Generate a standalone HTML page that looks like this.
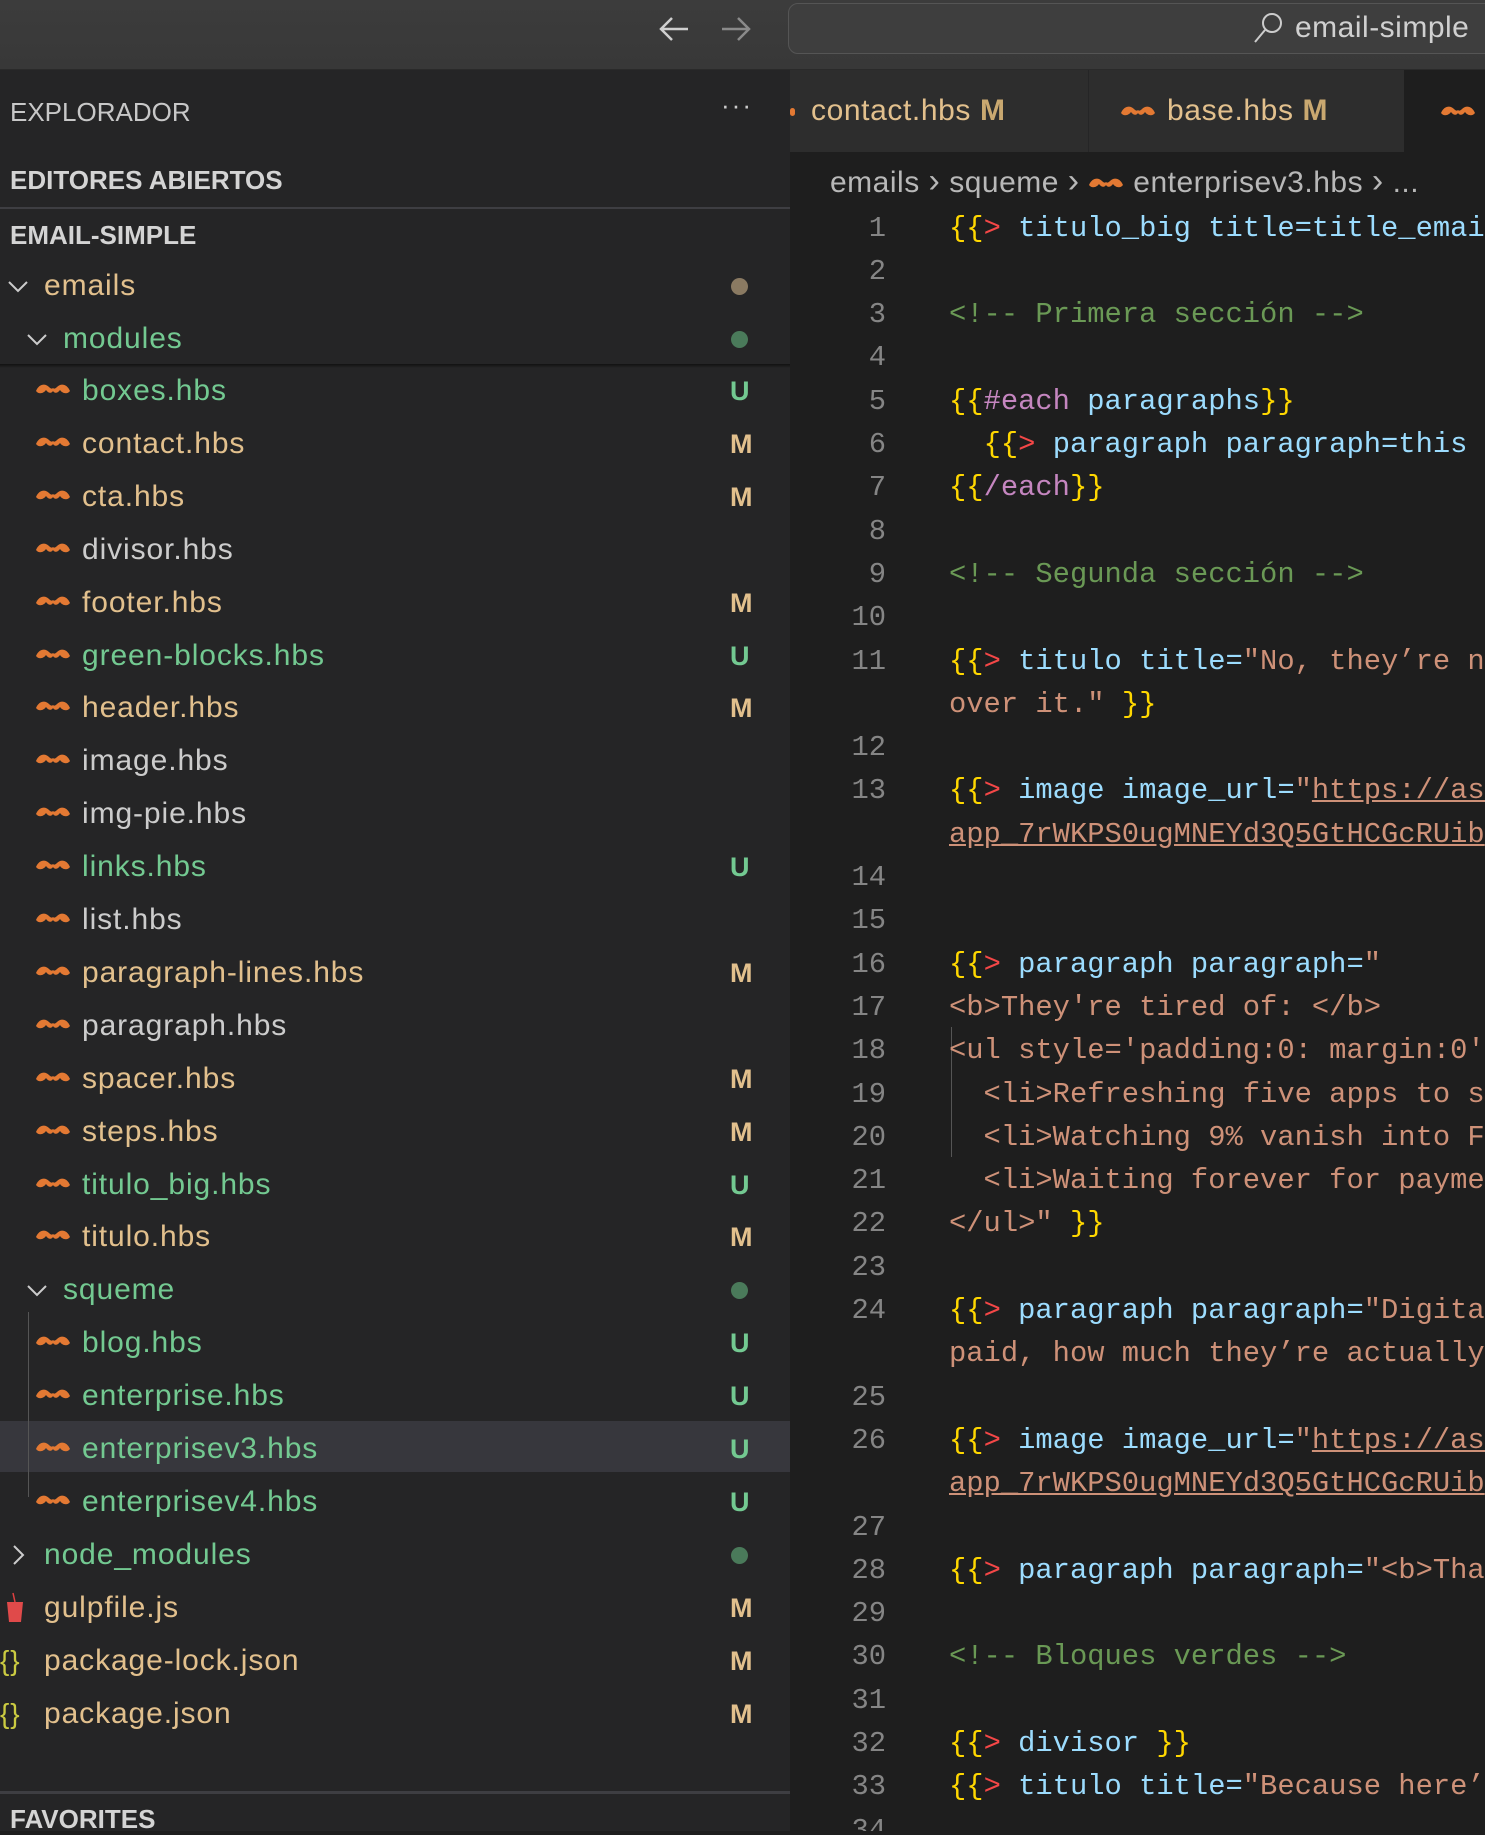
<!DOCTYPE html>
<html><head><meta charset="utf-8"><style>
*{margin:0;padding:0;box-sizing:border-box}
body{width:1485px;height:1831px;overflow:hidden;background:#1e1e1e;position:relative;font-family:"Liberation Sans",sans-serif}
.title{position:absolute;left:0;top:0;width:1485px;height:70px;background:linear-gradient(#3c3c3c,#383838);border-bottom:1px solid #2a2a2a}
.search{position:absolute;left:788px;top:3px;width:710px;height:51px;border:1.5px solid #555;border-radius:10px;background:#3e3e3e}
.side{position:absolute;left:0;top:70px;width:790px;height:1761px;background:#252526}
.r{position:absolute;left:0;width:790px;height:52px;line-height:52px;font-size:30px;letter-spacing:0.9px;white-space:nowrap}
.r .t{position:absolute}
.b{position:absolute;left:730px;font-size:27px;font-weight:bold;letter-spacing:0}
.dot{position:absolute;left:731px;width:17px;height:17px;border-radius:50%;top:18px}
.g{color:#73c991}.m{color:#e2c08d}.w{color:#cccccc}
.ic{position:absolute;left:35px;top:15px}
.tabs{position:absolute;left:790px;top:70px;width:695px;height:82px;background:#252526}
.code{position:absolute;left:790px;top:152px;width:695px;height:1679px;background:#1e1e1e;overflow:hidden}
.l{position:absolute;left:0;height:43px;line-height:43px;font-family:"Liberation Mono",monospace;font-size:28.8px;white-space:pre}
.n{position:absolute;width:96px;text-align:right;color:#858585}
.c{position:absolute;left:159px}
.y{color:#ffd700}.rd{color:#f44747}.bl{color:#9cdcfe}.s{color:#ce9178}.cm{color:#6a9955}.p{color:#c586c0}.u{text-decoration:underline}
</style></head><body>
<svg width="0" height="0" style="position:absolute"><defs><symbol id="mu" viewBox="0 0 36 20"><path d="M1 11c3-7 9-8 13-4 2 2 3 2 4 1 1 1 2 1 4-1 4-4 10-3 13 4-3 4-8 2-10-1-2 3-5 4-7 1-2 3-5 2-7-1-2 3-7 5-10 1z" fill="#e37933"/></symbol></defs></svg>
<div class="title">
<svg style="position:absolute;left:656px;top:12px" width="40" height="34" viewBox="0 0 40 34"><path d="M32 17H6M16 6L5 17l11 11" stroke="#cfcfcf" stroke-width="2.5" fill="none"/></svg>
<svg style="position:absolute;left:716px;top:12px" width="40" height="34" viewBox="0 0 40 34"><path d="M6 17h26M22 6l11 11-11 11" stroke="#8a8a8a" stroke-width="2.5" fill="none"/></svg>
<div class="search"></div>
<svg style="position:absolute;left:1250px;top:10px" width="36" height="36" viewBox="0 0 36 36"><circle cx="22" cy="13" r="9" stroke="#ccc" stroke-width="2" fill="none"/><path d="M15 20L5 32" stroke="#ccc" stroke-width="2"/></svg>
<div style="position:absolute;left:1295px;top:11px;font-size:30px;letter-spacing:0.5px;color:#d0d0d0">email-simple</div>
</div>
<div class="side">
<div style="position:absolute;left:10px;top:27px;font-size:26px;color:#c8c8c8">EXPLORADOR</div>
<div style="position:absolute;left:721px;top:20px;font-size:26px;color:#ccc;letter-spacing:2px">···</div>
<div style="position:absolute;left:10px;top:95px;font-size:26px;color:#d4d4d4;font-weight:bold">EDITORES ABIERTOS</div>
<div style="position:absolute;left:0;top:137px;width:790px;height:2px;background:#3e3e42"></div>
<div style="position:absolute;left:10px;top:150px;font-size:26px;color:#d4d4d4;font-weight:bold">EMAIL-SIMPLE</div>
<div style="position:absolute;left:0;top:1721px;width:790px;height:3px;background:#3e3e42"></div>
<div style="position:absolute;left:10px;top:1734px;font-size:26px;color:#d4d4d4;font-weight:bold">FAVORITES</div>
</div>
<div style="position:absolute;left:0;top:1421px;width:790px;height:51px;background:#37373d"></div>
<div style="position:absolute;left:28px;top:1312px;width:1px;height:185px;background:#555"></div>
<div style="position:absolute;left:0;top:364px;width:790px;height:4px;background:linear-gradient(#111,#252526)"></div>
<div class="r" style="top:260px"><svg style="position:absolute;left:6px;top:16px" width="24" height="20"><path d="M3 6l9 9 9-9" stroke="#ccc" stroke-width="2" fill="none"/></svg><span class="t m" style="left:44px">emails</span><span class="dot" style="background:#8a7a62"></span></div>
<div class="r" style="top:313px"><svg style="position:absolute;left:25px;top:16px" width="24" height="20"><path d="M3 6l9 9 9-9" stroke="#ccc" stroke-width="2" fill="none"/></svg><span class="t g" style="left:63px">modules</span><span class="dot" style="background:#4a7a5a"></span></div>
<div id="files"></div>
<script>
var F=[["boxes.hbs","g","U"],["contact.hbs","m","M"],["cta.hbs","m","M"],["divisor.hbs","w",""],["footer.hbs","m","M"],["green-blocks.hbs","g","U"],["header.hbs","m","M"],["image.hbs","w",""],["img-pie.hbs","w",""],["links.hbs","g","U"],["list.hbs","w",""],["paragraph-lines.hbs","m","M"],["paragraph.hbs","w",""],["spacer.hbs","m","M"],["steps.hbs","m","M"],["titulo_big.hbs","g","U"],["titulo.hbs","m","M"],["#squeme","g","dot"],["blog.hbs","g","U"],["enterprise.hbs","g","U"],["enterprisev3.hbs","g","U"],["enterprisev4.hbs","g","U"],["!node_modules","g","dot"],["*gulpfile.js","m","M"],["{package-lock.json","m","M"],["{package.json","m","M"]];
var h="";
F.forEach(function(f,i){var top=391+52.9*i-26,n=f[0],c=f[1],b=f[2],inner="";
if(n[0]=="#"){inner='<svg style="position:absolute;left:25px;top:16px" width="24" height="20"><path d="M3 6l9 9 9-9" stroke="#ccc" stroke-width="2" fill="none"/></svg><span class="t '+c+'" style="left:63px">'+n.slice(1)+'</span>';}
else if(n[0]=="!"){inner='<svg style="position:absolute;left:8px;top:14px" width="20" height="24"><path d="M6 3l9 9-9 9" stroke="#ccc" stroke-width="2" fill="none"/></svg><span class="t '+c+'" style="left:44px">'+n.slice(1)+'</span>';}
else if(n[0]=="*"){inner='<svg style="position:absolute;left:4px;top:10px" width="22" height="34"><path d="M9 1l2 9" stroke="#e04040" stroke-width="1.5"/><path d="M3 10h16l-2 20h-12z" fill="#e04a4a"/></svg><span class="t '+c+'" style="left:44px">'+n.slice(1)+'</span>';}
else if(n[0]=="{"){inner='<span class="t" style="left:0;color:#cbcb41;font-size:28px">{}</span><span class="t '+c+'" style="left:44px">'+n.slice(1)+'</span>';}
else{inner='<svg class="ic" width="36" height="20"><use href="#mu"/></svg><span class="t '+c+'" style="left:82px">'+n+'</span>';}
if(b=="dot")inner+='<span class="dot" style="background:#4a7a5a"></span>';else if(b)inner+='<span class="b '+(b=="U"?"g":"m")+'">'+b+'</span>';
h+='<div class="r" style="top:'+top+'px">'+inner+'</div>';});
document.getElementById("files").innerHTML=h;
</script>
<div class="tabs">
<div style="position:absolute;left:0;top:0;width:298px;height:82px;background:#2d2d2d"></div>
<div style="position:absolute;left:299px;top:0;width:315px;height:82px;background:#2d2d2d"></div>
<div style="position:absolute;left:614px;top:0;width:81px;height:82px;background:#1e1e1e"></div>
<div style="position:absolute;left:0;top:38px;width:5px;height:8px;background:#e37933;border-radius:3px"></div>
<div style="position:absolute;left:21px;top:24px;font-size:30px;letter-spacing:0.6px;color:#e2c08d">contact.hbs <b style="color:#c9a870">M</b></div>
<svg style="position:absolute;left:330px;top:32px" width="36" height="20"><use href="#mu"/></svg>
<div style="position:absolute;left:377px;top:24px;font-size:30px;letter-spacing:0.6px;color:#e2c08d">base.hbs <b style="color:#c9a870">M</b></div>
<svg style="position:absolute;left:650px;top:32px" width="36" height="20"><use href="#mu"/></svg>
</div>
<div class="code">
<div style="position:absolute;left:40px;top:10px;font-size:30px;letter-spacing:0.5px;color:#b8b8b8;white-space:nowrap">emails <span style="font-size:34px">&#8250;</span> squeme <span style="font-size:34px">&#8250;</span> <svg width="36" height="20" style="vertical-align:middle"><use href="#mu"/></svg> enterprisev3.hbs <span style="font-size:34px">&#8250;</span> ...</div>
<div style="position:absolute;left:161px;top:875px;width:1px;height:130px;background:#555"></div>
<div id="cl"></div>
</div>
<script>
var Y='<span class="y">{{</span><span class="rd">&gt;</span> ',E=' <span class="y">}}</span>';
var R=[["1",Y+'<span class="bl">titulo_big title=title_email</span>'],["2",""],["3",'<span class="cm">&lt;!-- Primera sección --&gt;</span>'],["4",""],
["5",'<span class="y">{{</span><span class="p">#each</span> <span class="bl">paragraphs</span><span class="y">}}</span>'],
["6",'  <span class="y">{{</span><span class="rd">&gt;</span> <span class="bl">paragraph paragraph=this</span>'],
["7",'<span class="y">{{</span><span class="p">/each</span><span class="y">}}</span>'],["8",""],["9",'<span class="cm">&lt;!-- Segunda sección --&gt;</span>'],["10",""],
["11",Y+'<span class="bl">titulo title=</span><span class="s">"No, they’re not over</span>'],["",'<span class="s">over it."</span>'+E],["12",""],
["13",Y+'<span class="bl">image image_url=</span><span class="s">"<span class="u">https://assets</span></span>'],["",'<span class="s u">app_7rWKPS0ugMNEYd3Q5GtHCGcRUib</span>'],["14",""],["15",""],
["16",Y+'<span class="bl">paragraph paragraph=</span><span class="s">"</span>'],["17",'<span class="s">&lt;b&gt;They\'re tired of: &lt;/b&gt;</span>'],
["18",'<span class="s">&lt;ul style=\'padding:0: margin:0\'&gt;</span>'],["19",'<span class="s">  &lt;li&gt;Refreshing five apps to see</span>'],
["20",'<span class="s">  &lt;li&gt;Watching 9% vanish into Fees</span>'],["21",'<span class="s">  &lt;li&gt;Waiting forever for payments</span>'],
["22",'<span class="s">&lt;/ul&gt;"</span>'+E],["23",""],
["24",Y+'<span class="bl">paragraph paragraph=</span><span class="s">"Digital</span>'],["",'<span class="s">paid, how much they’re actually</span>'],["25",""],
["26",Y+'<span class="bl">image image_url=</span><span class="s">"<span class="u">https://assets</span></span>'],["",'<span class="s u">app_7rWKPS0ugMNEYd3Q5GtHCGcRUib</span>'],["27",""],
["28",Y+'<span class="bl">paragraph paragraph=</span><span class="s">"&lt;b&gt;Thanks</span>'],["29",""],["30",'<span class="cm">&lt;!-- Bloques verdes --&gt;</span>'],["31",""],
["32",Y+'<span class="bl">divisor</span>'+E],["33",Y+'<span class="bl">titulo title=</span><span class="s">"Because here’s</span>'],["34",""]];
var o="";R.forEach(function(r,i){var t=228-152-21.5+43.3*i;o+='<div class="l" style="top:'+t+'px;width:695px"><span class="n">'+r[0]+'</span><span class="c">'+r[1]+'</span></div>';});
document.getElementById("cl").innerHTML=o;
</script>
</body></html>
